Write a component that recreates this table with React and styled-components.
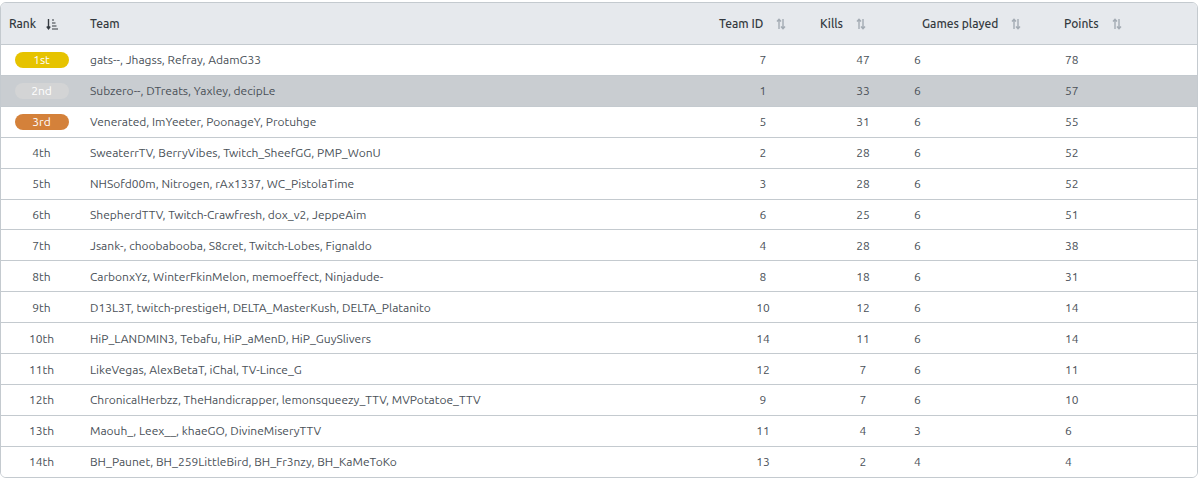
import React from "react";
import styled, { createGlobalStyle } from "styled-components";

const Global = createGlobalStyle`
  html, body { margin: 0; padding: 0; background: #ffffff; }
  body { font-family: Ubuntu, Lato, "Noto Sans", sans-serif; }
`;

const Wrap = styled.div`
  padding-top: 2px;
  width: 1198px;
`;

const Table = styled.table`
  width: 100%;
  table-layout: fixed;
  border-collapse: separate;
  border-spacing: 0;
  border: 1px solid #c4cacf;
  border-radius: 6px;
  overflow: hidden;
  font-size: 12px;
`;

const Th = styled.th`
  background: #e6e9ed;
  height: 41px;
  padding: 0 0 0 ${(p) => p.$pl || 8}px;
  text-align: left;
  font-weight: 500;
  color: #343a40;
  border-bottom: 1px solid #c4cacf;
  white-space: nowrap;
`;

const HeadInner = styled.span`
  display: inline-flex;
  align-items: center;
  gap: ${(p) => p.$gap || 13}px;
`;

const Tr = styled.tr`
  background: ${(p) => (p.$hl ? "#c9cdd1" : "#ffffff")};
`;

const Td = styled.td`
  height: 29.92px;
  padding: 0 ${(p) => p.$pr || 0}px 0 ${(p) => p.$pl || 0}px;
  text-align: ${(p) => p.$align || "left"};
  color: #495057;
  border-bottom: ${(p) => (p.$last ? "none" : "1px solid #c4cacf")};
  white-space: nowrap;
`;

const Badge = styled.span`
  display: inline-block;
  width: 54px;
  height: 16px;
  line-height: 16px;
  border-radius: 8px;
  background: ${(p) => p.$bg};
  color: #ffffff;
  text-align: center;
  font-size: 12px;
`;

const SortIcon = () => (
  <svg width="10" height="12" viewBox="0 0 10 12" fill="none" stroke="#a3abb3" strokeWidth="1.4">
    <path d="M3 11V1.5M1 3.5L3 1.2L5 3.5" />
    <path d="M7 1v9.5M5 8.5L7 10.8L9 8.5" />
  </svg>
);

const SortDownIcon = () => (
  <svg width="12" height="12" viewBox="0 0 12 12" fill="none" stroke="#343a40" strokeWidth="1.4">
    <path d="M2.5 1v9.5M0.8 8.5L2.5 10.8L4.2 8.5" />
    <path d="M6 2h2M6 5h3.5M6 8h4.5M6 11h6" strokeWidth="1.1" />
  </svg>
);

const rows = [
  ["gats--, Jhagss, Refray, AdamG33", 7, 47, 6, 78],
  ["Subzero--, DTreats, Yaxley, decipLe", 1, 33, 6, 57],
  ["Venerated, ImYeeter, PoonageY, Protuhge", 5, 31, 6, 55],
  ["SweaterrTV, BerryVibes, Twitch_SheefGG, PMP_WonU", 2, 28, 6, 52],
  ["NHSofd00m, Nitrogen, rAx1337, WC_PistolaTime", 3, 28, 6, 52],
  ["ShepherdTTV, Twitch-Crawfresh, dox_v2, JeppeAim", 6, 25, 6, 51],
  ["Jsank-, choobabooba, S8cret, Twitch-Lobes, Fignaldo", 4, 28, 6, 38],
  ["CarbonxYz, WinterFkinMelon, memoeffect, Ninjadude-", 8, 18, 6, 31],
  ["D13L3T, twitch-prestigeH, DELTA_MasterKush, DELTA_Platanito", 10, 12, 6, 14],
  ["HiP_LANDMIN3, Tebafu, HiP_aMenD, HiP_GuySlivers", 14, 11, 6, 14],
  ["LikeVegas, AlexBetaT, iChal, TV-Lince_G", 12, 7, 6, 11],
  ["ChronicalHerbzz, TheHandicrapper, lemonsqueezy_TTV, MVPotatoe_TTV", 9, 7, 6, 10],
  ["Maouh_, Leex__, khaeGO, DivineMiseryTTV", 11, 4, 3, 6],
  ["BH_Paunet, BH_259LittleBird, BH_Fr3nzy, BH_KaMeToKo", 13, 2, 4, 4],
];

const badgeColors = ["#e6c300", "#d3d4d5", "#d4813a"];

const ordinal = (n) => {
  const s = ["th", "st", "nd", "rd"];
  const v = n % 100;
  return n + (s[(v - 20) % 10] || s[v] || s[0]);
};

export default function App() {
  return (
    <>
      <Global />
      <Wrap>
        <Table>
          <colgroup>
            <col style={{ width: 81 }} />
            <col style={{ width: 628 }} />
            <col style={{ width: 102 }} />
            <col style={{ width: 102 }} />
            <col style={{ width: 142 }} />
            <col />
          </colgroup>
          <thead>
            <tr>
              <Th $pl={8}>
                <HeadInner $gap={10}>
                  Rank <SortDownIcon />
                </HeadInner>
              </Th>
              <Th $pl={8}>Team</Th>
              <Th $pl={9}>
                <HeadInner>
                  Team ID <SortIcon />
                </HeadInner>
              </Th>
              <Th $pl={8}>
                <HeadInner>
                  Kills <SortIcon />
                </HeadInner>
              </Th>
              <Th $pl={8}>
                <HeadInner>
                  Games played <SortIcon />
                </HeadInner>
              </Th>
              <Th $pl={8}>
                <HeadInner>
                  Points <SortIcon />
                </HeadInner>
              </Th>
            </tr>
          </thead>
          <tbody>
            {rows.map((r, i) => {
              const last = i === rows.length - 1;
              return (
                <Tr key={i} $hl={i === 1}>
                  <Td $align="center" $last={last}>
                    {i < 3 ? <Badge $bg={badgeColors[i]}>{ordinal(i + 1)}</Badge> : ordinal(i + 1)}
                  </Td>
                  <Td $pl={8} $last={last}>{r[0]}</Td>
                  <Td $align="center" $pl={4} $last={last}>{r[1]}</Td>
                  <Td $align="center" $last={last}>{r[2]}</Td>
                  <Td $align="right" $pr={137} $last={last}>{r[3]}</Td>
                  <Td $pl={9} $last={last}>{r[4]}</Td>
                </Tr>
              );
            })}
          </tbody>
        </Table>
      </Wrap>
    </>
  );
}
